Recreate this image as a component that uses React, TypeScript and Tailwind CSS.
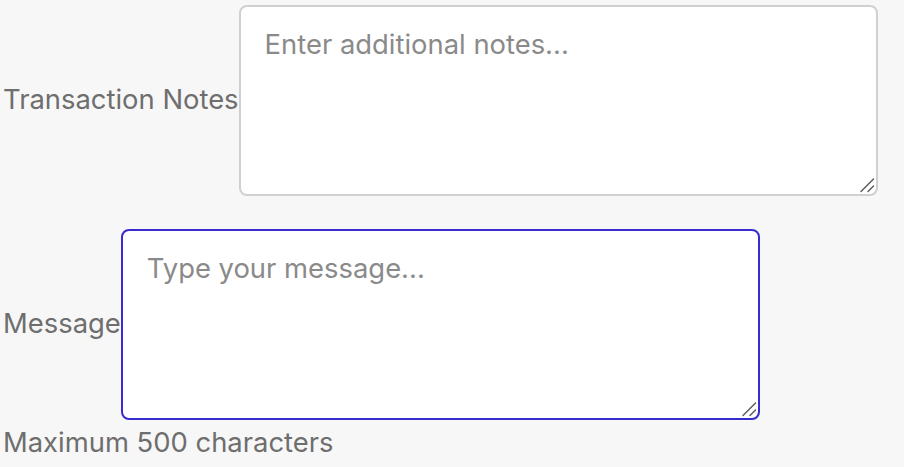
import React from "react";

function Grip() {
  return (
    <svg
      className="pointer-events-none absolute bottom-[3px] right-[3px]"
      width="16"
      height="16"
      viewBox="0 0 16 16"
    >
      <line x1="2" y1="14.5" x2="14.5" y2="2" stroke="#5a5a5a" strokeWidth="1.4" strokeLinecap="round" />
      <line x1="9" y1="14.5" x2="14.5" y2="9" stroke="#5a5a5a" strokeWidth="1.4" strokeLinecap="round" />
    </svg>
  );
}

export default function App() {
  return (
    <div
      className="min-h-[467px] w-full bg-[#f7f7f7] pl-[3px] pr-[4px] pt-[5px] text-[27.4px] leading-[40px] text-[#6e6e6e]"
      style={{ fontFamily: "Inter, 'Noto Sans', sans-serif" }}
    >
      <div className="flex items-center">
        <label className="whitespace-nowrap pb-[4px]">Transaction Notes</label>
        <div className="relative">
          <textarea
            placeholder="Enter additional notes..."
            className="block h-[191px] w-[639px] resize-none rounded-[8px] border-2 border-[#d0d0d0] bg-white px-[24px] py-[17px] text-[27.4px] leading-[40px] text-[#333] outline-none placeholder:text-[#8a8a8a]"
          />
          <Grip />
        </div>
      </div>
      <div className="mt-[33px] flex items-center">
        <label className="whitespace-nowrap pb-[4px]">Message</label>
        <div className="relative">
          <textarea
            placeholder="Type your message..."
            className="block h-[191px] w-[639px] resize-none rounded-[8px] border-2 border-[#3a2bd0] bg-white px-[24px] py-[17px] text-[27.4px] leading-[40px] text-[#333] outline-none placeholder:text-[#8a8a8a]"
          />
          <Grip />
        </div>
      </div>
      <div className="mt-[2px]">Maximum 500 characters</div>
    </div>
  );
}
